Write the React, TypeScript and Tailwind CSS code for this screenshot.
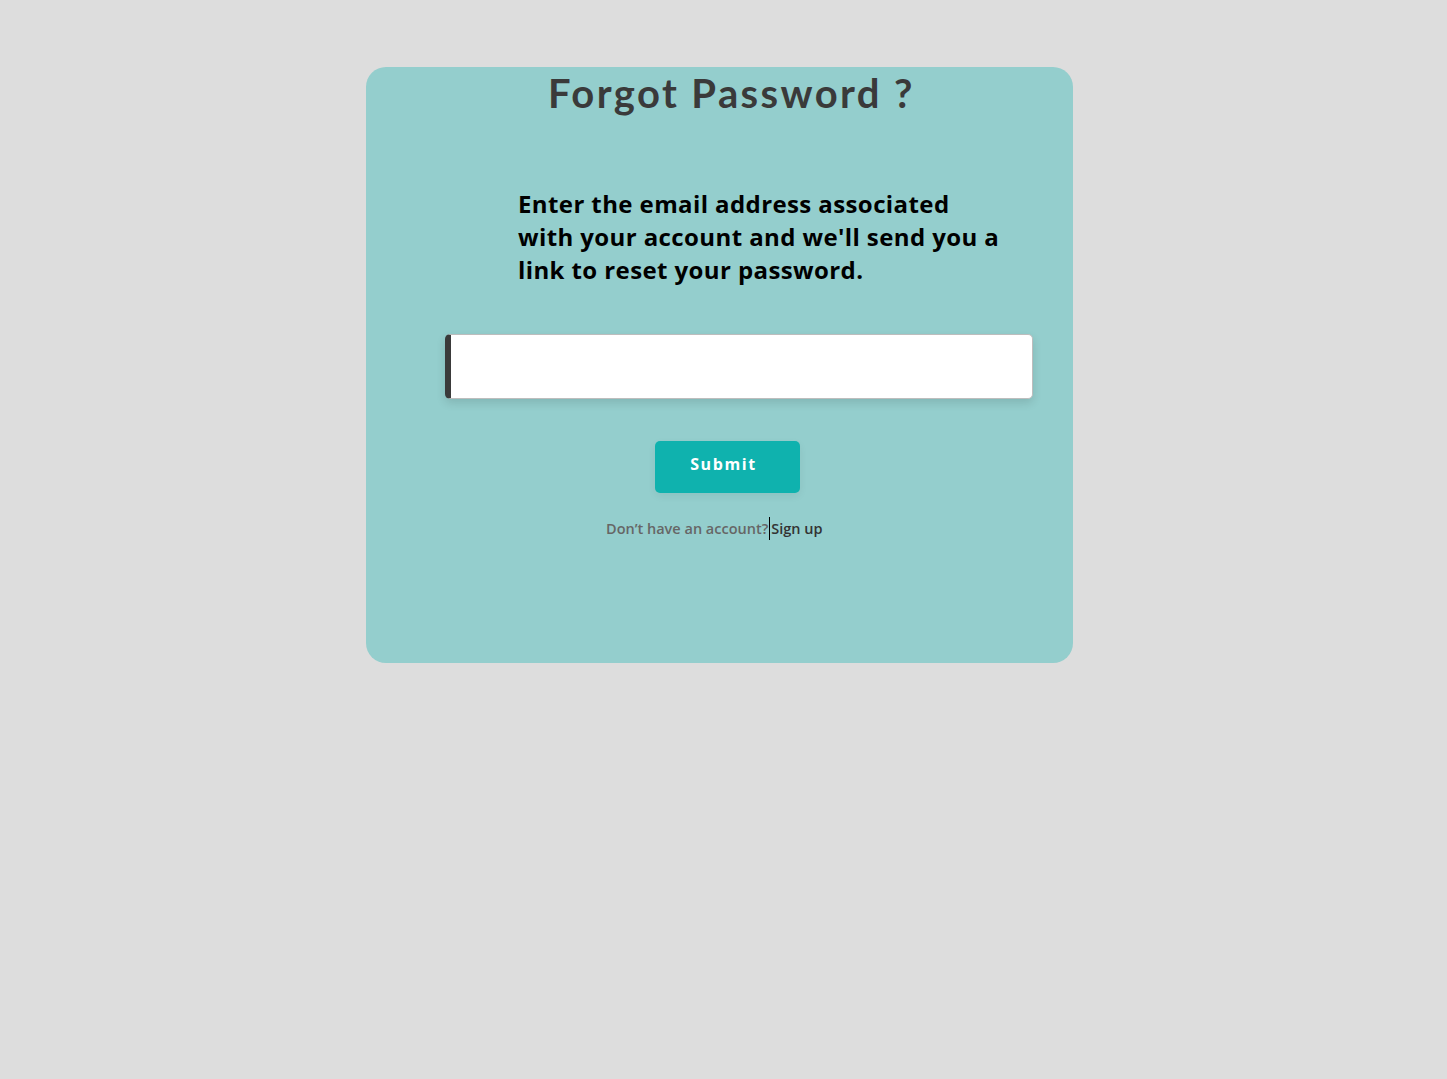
export default function App() {
  return (
    <div className="min-h-screen w-full bg-[#dddddd] pt-[67px] [font-family:'Open_Sans',sans-serif]">
      <div className="ml-[366px] flex h-[596px] w-[707px] flex-col rounded-[20px] bg-[#94cecd]">
        <h1 className="pl-[24px] text-center text-[40px] font-bold leading-[52px] tracking-[2.4px] text-[#3a3a3a] [font-family:'Lato',sans-serif]">
          Forgot Password ?
        </h1>
        <p className="ml-[152px] mt-[68px] w-[488px] text-[24px] font-bold leading-[33px] tracking-[0.4px] text-black">
          Enter the email address associated with your account and we'll send you a link to reset your password.
        </p>
        <input
          type="email"
          className="ml-[79px] mt-[48px] h-[65px] w-[588px] rounded-[5px] border border-[#bdbdbd] border-l-[6px] border-l-[#3a3a3a] bg-white px-3 text-lg shadow-[0_4px_10px_rgba(0,0,0,0.12)] outline-none"
        />
        <div className="ml-[289px] mt-[42px]">
          <button
            type="button"
            className="h-[52px] w-[145px] rounded-[5px] bg-[#0fb2ae] pb-[7px] pr-[8px] text-[16px] font-bold tracking-[1.6px] text-white shadow-[0_3px_8px_rgba(0,0,0,0.06)]"
          >
            Submit
          </button>
        </div>
        <div className="ml-[240px] mt-[24px] flex items-center text-[14.5px] font-semibold leading-[22px]">
          <span className="text-[#666666]">Don’t have an account?</span>
          <span className="mx-[1px] h-[23px] w-px bg-black" />
          <span className="text-[#333333]">Sign up</span>
        </div>
      </div>
    </div>
  );
}
